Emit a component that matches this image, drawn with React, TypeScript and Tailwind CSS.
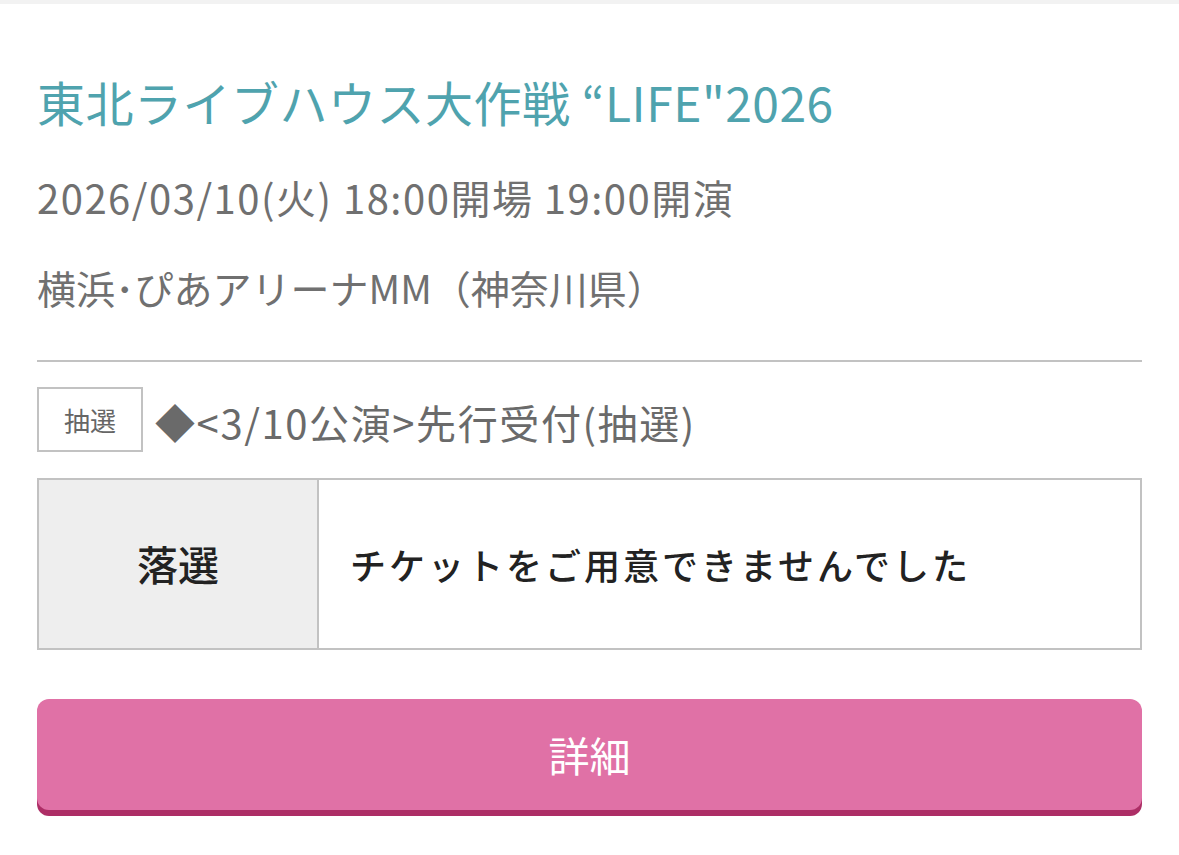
import React from 'react';

const font = { fontFamily: '"Noto Sans CJK JP", "Noto Sans", sans-serif' };

const App = () => {
    return (<div className="min-h-[855px] bg-white" style={font}>
        <div className="h-[4px] bg-[#f2f2f2]"/>
        <div className="px-[37px]">
            <h1 className="mt-[68px] text-[48px] leading-[58px] tracking-[0.5px] text-[#4fa3ae] whitespace-nowrap">
                東北ライブハウス大作戦 “LIFE"2026
            </h1>
            <p className="mt-[42px] text-[40px] leading-[50px] tracking-[1.5px] text-[#707070] whitespace-nowrap">
                2026/03/10(火) 18:00開場 19:00開演
            </p>
            <p className="mt-[40px] text-[39px] leading-[50px] text-[#707070] whitespace-nowrap">
                横浜･ぴあアリーナMM（神奈川県）
            </p>
            <div className="mt-[48px] border-t-2 border-[#c2c2c2]"/>
            <div className="mt-[25px] flex items-center gap-[12px]">
                <span
                    className="flex h-[65px] w-[106px] items-center justify-center border-2 border-[#c2c2c2] text-[26px] text-[#666]">
                    抽選
                </span>
                <span className="mt-[4px] text-[40px] leading-[50px] tracking-[1.6px] text-[#6a6a6a] whitespace-nowrap">
                    ◆&lt;3/10公演&gt;先行受付(抽選)
                </span>
            </div>
            <div className="mt-[26px] flex h-[172px] border-2 border-[#c2c2c2]">
                <div
                    className="flex w-[280px] items-center justify-center border-r-2 border-[#c2c2c2] bg-[#eeeeee] text-[41px] font-medium text-[#222]">
                    落選
                </div>
                <div className="flex flex-1 items-center pl-[31px] text-[36px] font-medium tracking-[3px] text-[#222]">
                    チケットをご用意できませんでした
                </div>
            </div>
            <button
                className="mt-[49px] flex h-[111px] w-full items-center justify-center rounded-[12px] bg-[#e071a6] text-[41px] text-white shadow-[0_6px_0_#ad2e66]">
                詳細
            </button>
        </div>
    </div>);
};

export default App;
